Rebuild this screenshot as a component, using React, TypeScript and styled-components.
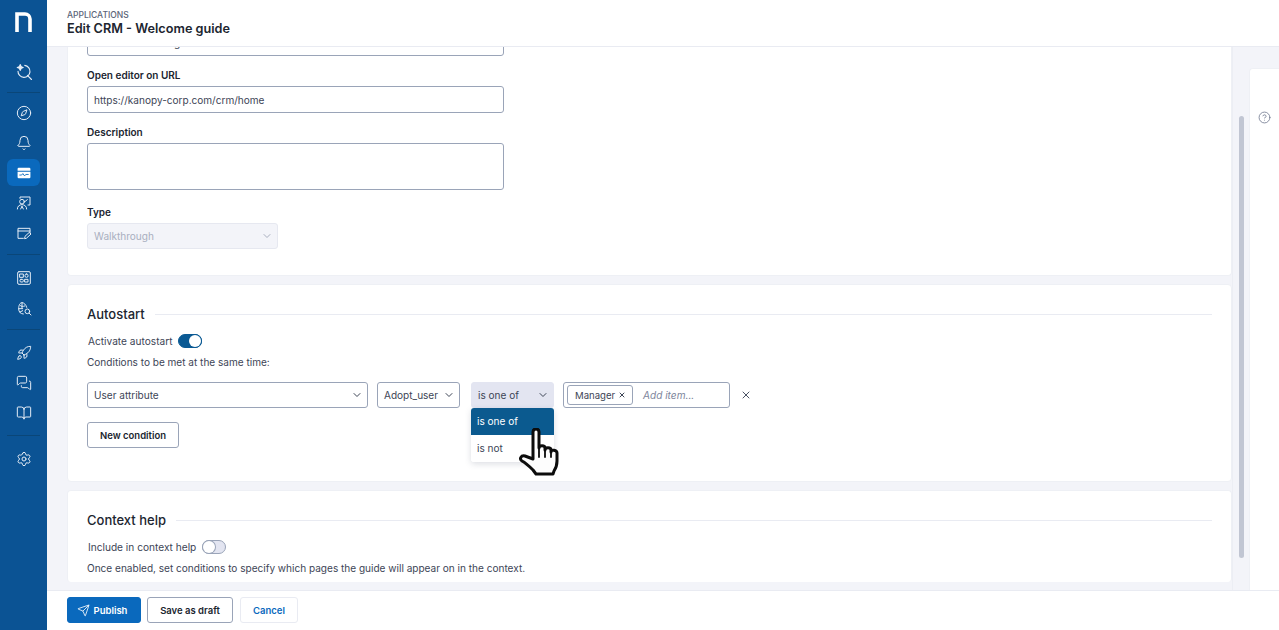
import React from 'react';
import styled, { createGlobalStyle } from 'styled-components';
import {
  BookOpen,
  Bell,
  ChevronDown,
  CircleHelp,
  Compass,
  MessagesSquare,
  Rocket,
  Send,
  Settings,
  X,
} from 'lucide-react';

const GlobalStyle = createGlobalStyle`
  html, body, #root {
    margin: 0;
    height: 100%;
  }
  body {
    font-family: Inter, "Liberation Sans", sans-serif;
    color: #2b3242;
    overflow: hidden;
  }
  * {
    box-sizing: border-box;
  }
`;

const Shell = styled.div`
  display: flex;
  width: 100%;
  height: 630px;
  background: #f3f4f9;
`;

const Sidebar = styled.nav`
  flex: 0 0 47px;
  background: #0b5394;
  color: #e6edf6;
  display: flex;
  flex-direction: column;
  align-items: center;
`;

const Logo = styled.div`
  height: 49px;
  padding-top: 12px;
`;

const NavGroup = styled.div<{ $top?: number; $bottom?: number }>`
  width: 100%;
  display: flex;
  flex-direction: column;
  align-items: center;
  padding: ${(p) => p.$top ?? 9}px 0 ${(p) => p.$bottom ?? 9}px;
  gap: 3px;
  position: relative;

  &:not(:last-child)::after {
    content: '';
    position: absolute;
    left: 7px;
    right: 7px;
    bottom: 0;
    height: 1px;
    background: #0a4678;
  }
`;

const NavItem = styled.div<{ $active?: boolean; $size?: number }>`
  width: 33px;
  height: 27px;
  display: flex;
  align-items: center;
  justify-content: center;
  border-radius: 6px;
  background: ${(p) => (p.$active ? '#0a69bd' : 'transparent')};
  color: ${(p) => (p.$active ? '#ffffff' : '#e6edf6')};

  svg {
    width: ${(p) => p.$size ?? 16}px;
    height: ${(p) => p.$size ?? 16}px;
    stroke-width: 1.5;
  }
`;

const Main = styled.div`
  flex: 1;
  min-width: 0;
  display: flex;
  flex-direction: column;
`;

const Header = styled.header`
  flex: 0 0 47px;
  background: #fff;
  border-bottom: 1px solid #e9ebf2;
  padding: 10px 20px 0;
`;

const Crumb = styled.div`
  font-size: 8.5px;
  line-height: 10px;
  font-weight: 500;
  color: #5b6478;
`;

const Title = styled.h1`
  margin: 0;
  font-size: 12.7px;
  line-height: 17px;
  font-weight: 600;
  color: #20252f;
`;

const Body = styled.div`
  flex: 1;
  min-height: 0;
  display: flex;
`;

const Scroller = styled.div`
  flex: 0 0 1185px;
  overflow: hidden;
  padding-left: 20px;
  display: flex;
  flex-direction: column;
  gap: 8px;
`;

const Card = styled.section`
  flex: none;
  width: 1165px;
  background: #fff;
  border: 1px solid #eef0f5;
  border-radius: 4px;
  padding: 0 19px;
`;

const FormCard = styled(Card)`
  height: 276px;
  margin-top: -47px;
  padding-top: 29px;
  border-top: none;
`;

const AutostartCard = styled(Card)`
  height: 198px;
  padding-top: 20px;
`;

const HelpCard = styled(Card)`
  height: 92px;
  padding-top: 20px;
  border-bottom: none;
  overflow: hidden;
`;

const Rail = styled.div`
  flex: 0 0 17px;
  background: #f3f4f9;
  border-left: 1px solid #eceef4;
  padding: 69px 4px 0;
`;

const Thumb = styled.div`
  height: 442px;
  border-radius: 3px;
  background: #c1c6d3;
  width: 5px;
  margin-left: 2px;
`;

const HelpColumn = styled.aside`
  flex: 1;
  padding-top: 21px;
`;

const HelpPanel = styled.div`
  height: 100%;
  background: #fff;
  border-left: 1px solid #eef0f5;
  border-top: 1px solid #eef0f5;
  border-radius: 4px 0 0 0;
  padding: 39px 0 0 8px;
  color: #6f778e;
`;

const Field = styled.div`
  display: flex;
  flex-direction: column;
  margin-bottom: 13px;
`;

const Label = styled.label`
  font-size: 10px;
  line-height: 13px;
  font-weight: 600;
  color: #20252f;
  margin-bottom: 4px;
`;

const Input = styled.div`
  width: 417px;
  height: 27px;
  border: 1px solid #9aa4b8;
  border-radius: 3px;
  background: #fff;
  padding: 0 6px;
  font-size: 10.05px;
  line-height: 26px;
  color: #3d4556;
`;

const TextArea = styled(Input)`
  height: 47px;
  margin-bottom: 3px;
`;

const Select = styled.div<{ $width: number; $filled?: boolean; $disabled?: boolean }>`
  flex: none;
  width: ${(p) => p.$width}px;
  height: 26px;
  display: flex;
  align-items: center;
  justify-content: space-between;
  padding: 0 4px 0 6px;
  border-radius: 3px;
  font-size: 10.05px;
  border: 1px solid ${(p) => (p.$filled ? '#e3e5f1' : p.$disabled ? '#e6e8f0' : '#9aa4b8')};
  background: ${(p) => (p.$filled ? '#e3e5f1' : p.$disabled ? '#f3f4f9' : '#fff')};
  color: ${(p) => (p.$disabled ? '#a9afbf' : '#3d4556')};

  svg {
    width: 12px;
    height: 12px;
    color: ${(p) => (p.$disabled ? '#a9afbf' : '#3d4556')};
  }
`;

const SectionHead = styled.div`
  display: flex;
  align-items: center;
  gap: 10px;
  height: 18px;
  margin-bottom: 10px;
`;

const SectionTitle = styled.h2`
  margin: 0;
  font-size: 13px;
  line-height: 18px;
  font-weight: 500;
  color: #20252f;
`;

const SectionRule = styled.div`
  flex: 1;
  height: 1px;
  background: #e9ebf2;
`;

const SwitchRow = styled.div`
  display: flex;
  align-items: center;
  gap: 6px;
  height: 16px;
  font-size: 10.15px;
  color: #3d4556;
  margin-left: 1px;
`;

const Switch = styled.div<{ $on?: boolean }>`
  width: 24px;
  height: 14px;
  border-radius: 7px;
  display: flex;
  justify-content: ${(p) => (p.$on ? 'flex-end' : 'flex-start')};
  background: ${(p) => (p.$on ? '#0b5a94' : '#e3e5f1')};
  border: 1px solid ${(p) => (p.$on ? '#0b5a94' : '#9aa4b8')};

  &::before {
    content: '';
    width: 12px;
    height: 12px;
    border-radius: 50%;
    background: #fff;
    box-shadow: 0 0 0 1px ${(p) => (p.$on ? '#0b5a94' : '#9aa4b8')};
  }
`;

const Note = styled.p`
  margin: 6px 0 0;
  font-size: 10.05px;
  line-height: 14px;
  color: #3d4556;
`;

const ConditionRow = styled.div`
  display: flex;
  align-items: center;
  gap: 9px;
  margin-top: 13px;
`;

const SelectWrap = styled.div`
  position: relative;
  margin-left: 2px;
`;

const Menu = styled.div`
  position: absolute;
  top: 26px;
  left: 0;
  width: 83px;
  background: #fff;
  border-radius: 3px;
  box-shadow: 0 2px 6px rgba(60, 70, 100, 0.18);
  font-size: 10.05px;
  overflow: hidden;
`;

const MenuItem = styled.div<{ $selected?: boolean }>`
  height: 27px;
  line-height: 27px;
  padding: 0 6px;
  background: ${(p) => (p.$selected ? '#0b5a8f' : '#fff')};
  color: ${(p) => (p.$selected ? '#fff' : '#3d4556')};
`;

const Cursor = styled.svg`
  position: absolute;
  left: 47px;
  top: 46px;
  width: 42px;
  height: 50px;
`;

const TagInput = styled.div`
  flex: none;
  width: 167px;
  height: 26px;
  display: flex;
  align-items: center;
  gap: 10px;
  padding: 0 3px;
  border: 1px solid #9aa4b8;
  border-radius: 3px;
`;

const Tag = styled.div`
  height: 20px;
  width: 66px;
  display: flex;
  align-items: center;
  justify-content: space-between;
  padding: 0 6px 0 7px;
  border: 1px solid #9aa4b8;
  border-radius: 3px;
  font-size: 9.6px;
  color: #3d4556;

  svg {
    width: 8px;
    height: 8px;
    stroke-width: 3;
  }
`;

const AddItem = styled.span`
  font-size: 10.1px;
  font-style: italic;
  color: #7d859b;
`;

const RemoveButton = styled.div`
  display: flex;
  color: #4a5264;
  margin-left: 1px;

  svg {
    width: 12px;
    height: 12px;
  }
`;

const Button = styled.button<{ $variant?: 'primary' | 'ghost'; $width: number }>`
  width: ${(p) => p.$width}px;
  height: 26px;
  display: inline-flex;
  align-items: center;
  justify-content: center;
  gap: 4px;
  padding: 0 ${(p) => (p.$variant === 'primary' ? 4 : 0)}px 0 0;
  border-radius: 3px;
  font-family: inherit;
  font-size: 9.5px;
  font-weight: 600;
  border: 1px solid
    ${(p) => (p.$variant === 'primary' ? '#0a69bd' : p.$variant === 'ghost' ? '#e9ebf2' : '#9aa4b8')};
  background: ${(p) => (p.$variant === 'primary' ? '#0a69bd' : '#fff')};
  color: ${(p) => (p.$variant === 'primary' ? '#fff' : p.$variant === 'ghost' ? '#0a69bd' : '#20252f')};

  svg {
    width: 13px;
    height: 13px;
    stroke-width: 1.5;
  }
`;

const NewCondition = styled(Button)`
  margin-top: 14px;
`;

const CancelButton = styled(Button)`
  margin-left: 1px;
`;

const Footer = styled.footer`
  flex: 0 0 40px;
  background: #fff;
  border-top: 1px solid #e9ebf2;
  display: flex;
  align-items: center;
  gap: 6px;
  padding: 0 20px 1px;
`;

const LogoMark = () => (
  <svg width="17" height="20" viewBox="0 0 17 20" fill="none">
    <path d="M2 20V2h8a5 5 0 0 1 5 5v13" stroke="#fff" strokeWidth="3.6" />
  </svg>
);

const base = {
  viewBox: '0 0 24 24',
  fill: 'none',
  stroke: 'currentColor',
  strokeWidth: 1.5,
  strokeLinecap: 'round' as const,
  strokeLinejoin: 'round' as const,
};

const SearchSpark = () => (
  <svg {...base}>
    <path d="M13 3.2A8 8 0 1 1 4 11" />
    <path d="M16.5 16.5 22 22" />
    <path d="M7 2c.4 2.6 1.4 3.6 4 4-2.6.4-3.6 1.4-4 4-.4-2.6-1.4-3.6-4-4 2.6-.4 3.6-1.4 4-4Z" fill="currentColor" />
  </svg>
);

const AppPulse = () => (
  <svg viewBox="0 0 24 24">
    <path d="M3 3h18a2 2 0 0 1 2 2v3H1V5a2 2 0 0 1 2-2Z" fill="currentColor" />
    <path d="M1 10h22v9a2 2 0 0 1-2 2H3a2 2 0 0 1-2-2Z" fill="currentColor" />
    <path d="M4 15.5h4l2-2.5 3 4 2-2.5h5" fill="none" stroke="#0a69bd" strokeWidth="1.5" />
  </svg>
);

const Training = () => (
  <svg {...base}>
    <path d="M6 5V3h15v12h-3" />
    <circle cx="9" cy="10" r="3.5" />
    <path d="M2 21c0-4 3-6.5 7-6.500s7 2.500 7 6.500" />
    <path d="m12 11 5-4M9 17l-2 4M9 17l2 4" />
  </svg>
);

const EditWindow = () => (
  <svg {...base}>
    <path d="M11 20H3V5h18v7" />
    <path d="M3 9h18" />
    <path d="m13 20 .5-3L20 11l2.500 2.500-6.500 6Z" />
  </svg>
);

const Dashboard = () => (
  <svg {...base}>
    <rect x="2.500" y="2.500" width="19" height="19" rx="2" />
    <rect x="6" y="6" width="5" height="5" />
    <rect x="13.500" y="6" width="4.500" height="5" rx="2" />
    <rect x="6" y="14" width="5" height="4" rx="1.500" />
    <rect x="13.500" y="14" width="4.500" height="4" />
  </svg>
);

const BugSearch = () => (
  <svg {...base}>
    <circle cx="17" cy="17" r="3.500" />
    <path d="m20 20 2.500 2.500" />
    <path d="M11 21c-4 0-7-3-7-8 0-5 2-9 5-9s6 3 7 7" />
    <path d="M6 8c2 2 4 2 7 1M4 13h6M6 18l4-2M9 4v8" />
  </svg>
);

const HandCursor = () => (
  <Cursor viewBox="0 0 42 50">
    <path
      d="M15 4c0-4 6-4 6 0v16c0-3 6-3 6 0v2c0-3 6-3 6 0v2c0-3 6-2 6 1v8c0 5-1 7-3 10l-1 3H18l-3-4c-3-3-7-7-11-9-3-2-1-6 3-5l8 3Z"
      fill="#fdfdfd"
      stroke="#0c0c0c"
      strokeWidth="3"
      strokeLinejoin="round"
    />
    <path d="M21 18v11M27 20v9M33 22v7" stroke="#0c0c0c" strokeWidth="1.8" strokeLinecap="round" />
  </Cursor>
);

const App: React.FC = () => {
  return (
    <>
      <GlobalStyle />
      <Shell>
        <Sidebar>
          <Logo>
            <LogoMark />
          </Logo>
          <NavGroup $bottom={8}>
            <NavItem $size={18}>
              <SearchSpark />
            </NavItem>
          </NavGroup>
          <NavGroup $top={6}>
            <NavItem>
              <Compass />
            </NavItem>
            <NavItem>
              <Bell />
            </NavItem>
            <NavItem $active $size={14}>
              <AppPulse />
            </NavItem>
            <NavItem>
              <Training />
            </NavItem>
            <NavItem>
              <EditWindow />
            </NavItem>
          </NavGroup>
          <NavGroup>
            <NavItem>
              <Dashboard />
            </NavItem>
            <NavItem>
              <BugSearch />
            </NavItem>
          </NavGroup>
          <NavGroup $bottom={10}>
            <NavItem>
              <Rocket />
            </NavItem>
            <NavItem>
              <MessagesSquare />
            </NavItem>
            <NavItem>
              <BookOpen />
            </NavItem>
          </NavGroup>
          <NavGroup>
            <NavItem>
              <Settings />
            </NavItem>
          </NavGroup>
        </Sidebar>
        <Main>
          <Header>
            <Crumb>APPLICATIONS</Crumb>
            <Title>Edit CRM - Welcome guide</Title>
          </Header>
          <Body>
            <Scroller>
              <FormCard>
                <Field>
                  <Input>CRM - Welcome guide</Input>
                </Field>
                <Field>
                  <Label>Open editor on URL</Label>
                  <Input>https://kanopy-corp.com/crm/home</Input>
                </Field>
                <Field>
                  <Label>Description</Label>
                  <TextArea />
                </Field>
                <Field>
                  <Label>Type</Label>
                  <Select $width={191} $disabled>
                    Walkthrough
                    <ChevronDown />
                  </Select>
                </Field>
              </FormCard>
              <AutostartCard>
                <SectionHead>
                  <SectionTitle>Autostart</SectionTitle>
                  <SectionRule />
                </SectionHead>
                <SwitchRow>
                  Activate autostart
                  <Switch $on />
                </SwitchRow>
                <Note>Conditions to be met at the same time:</Note>
                <ConditionRow>
                  <Select $width={281}>
                    User attribute
                    <ChevronDown />
                  </Select>
                  <Select $width={83}>
                    Adopt_user
                    <ChevronDown />
                  </Select>
                  <SelectWrap>
                    <Select $width={83} $filled>
                      is one of
                      <ChevronDown />
                    </Select>
                    <Menu>
                      <MenuItem $selected>is one of</MenuItem>
                      <MenuItem>is not</MenuItem>
                    </Menu>
                    <HandCursor />
                  </SelectWrap>
                  <TagInput>
                    <Tag>
                      Manager
                      <X />
                    </Tag>
                    <AddItem>Add item...</AddItem>
                  </TagInput>
                  <RemoveButton>
                    <X />
                  </RemoveButton>
                </ConditionRow>
                <NewCondition $width={92}>New condition</NewCondition>
              </AutostartCard>
              <HelpCard>
                <SectionHead>
                  <SectionTitle>Context help</SectionTitle>
                  <SectionRule />
                </SectionHead>
                <SwitchRow>
                  Include in context help
                  <Switch />
                </SwitchRow>
                <Note>Once enabled, set conditions to specify which pages the guide will appear on in the context.</Note>
              </HelpCard>
            </Scroller>
            <Rail>
              <Thumb />
            </Rail>
            <HelpColumn>
              <HelpPanel>
                <CircleHelp size={13} strokeWidth={1.5} />
              </HelpPanel>
            </HelpColumn>
          </Body>
          <Footer>
            <Button $variant="primary" $width={74}>
              <Send />
              Publish
            </Button>
            <Button $width={86}>Save as draft</Button>
            <CancelButton $variant="ghost" $width={58}>
              Cancel
            </CancelButton>
          </Footer>
        </Main>
      </Shell>
    </>
  );
};

export default App;
